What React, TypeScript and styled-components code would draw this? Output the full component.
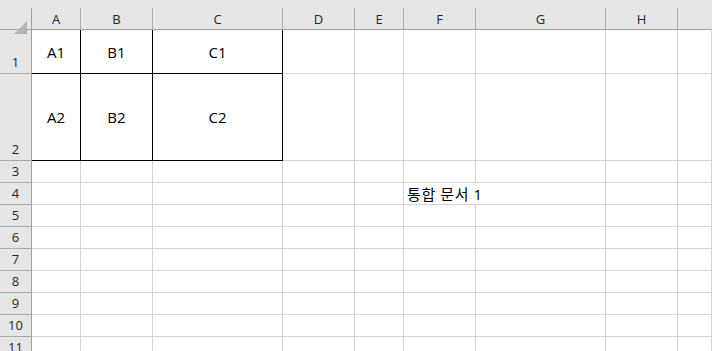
import React from 'react';
import styled, { createGlobalStyle } from 'styled-components';

const GlobalStyle = createGlobalStyle`
  html, body {
    margin: 0;
    padding: 0;
    overflow: hidden;
    background: #ffffff;
  }
  body {
    font-family: "Open Sans", "Noto Sans CJK KR", sans-serif;
  }
`;

// widths include the 1px right grid line
const COLUMNS = [
  { name: 'A', width: 49 },
  { name: 'B', width: 72 },
  { name: 'C', width: 130 },
  { name: 'D', width: 72 },
  { name: 'E', width: 49 },
  { name: 'F', width: 72 },
  { name: 'G', width: 130 },
  { name: 'H', width: 72 },
  { name: '', width: 34 },
];

// heights include the 1px bottom grid line
const ROWS = [44, 87, 22, 22, 22, 22, 22, 22, 22, 22, 22];

const cellData: Record<string, string> = {
  A1: 'A1',
  B1: 'B1',
  C1: 'C1',
  A2: 'A2',
  B2: 'B2',
  C2: 'C2',
  F4: '통합 문서 1',
};

const boxed = new Set(['A1', 'B1', 'C1', 'A2', 'B2', 'C2']);

const Sheet = styled.div`
  display: grid;
  grid-template-columns: 32px ${COLUMNS.map((c) => `${c.width}px`).join(' ')};
  grid-template-rows: 8px 22px ${ROWS.map((h) => `${h}px`).join(' ')};
  width: 712px;
  height: 351px;
  overflow: hidden;
  background: #ffffff;
`;

const TopStrip = styled.div`
  grid-column: 1 / -1;
  background: #e6e6e6;
`;

const Corner = styled.div`
  position: relative;
  background: #e6e6e6;
  border-right: 1px solid #9f9f9f;
  border-bottom: 1px solid #9f9f9f;
  box-sizing: border-box;

  &::after {
    content: '';
    position: absolute;
    left: 14px;
    top: 13px;
    width: 0;
    height: 0;
    border-style: solid;
    border-width: 0 0 13px 13px;
    border-color: transparent transparent #b5b5b5 transparent;
  }
`;

const ColHeader = styled.div<{ $last?: boolean }>`
  display: flex;
  align-items: center;
  justify-content: center;
  background: #e6e6e6;
  border-right: 1px solid ${({ $last }) => ($last ? '#e6e6e6' : '#ababab')};
  border-bottom: 1px solid #9f9f9f;
  box-sizing: border-box;
  font-size: 13px;
  color: #262626;
  padding-top: 1px;
`;

const RowHeader = styled.div`
  display: flex;
  align-items: flex-end;
  justify-content: center;
  background: #e6e6e6;
  border-right: 1px solid #9f9f9f;
  border-bottom: 1px solid #ababab;
  box-sizing: border-box;
  font-size: 13px;
  color: #262626;
  padding-bottom: 1px;
  line-height: 19px;
`;

const Cell = styled.div<{ $boxed?: boolean; $spill?: boolean; $left?: boolean }>`
  display: flex;
  align-items: center;
  justify-content: ${({ $left }) => ($left ? 'flex-start' : 'center')};
  padding-left: ${({ $left }) => ($left ? '3px' : '0')};
  box-sizing: border-box;
  border-right: 1px solid
    ${({ $boxed, $spill }) => ($boxed ? '#000000' : $spill ? '#ffffff' : '#d4d4d4')};
  border-bottom: 1px solid ${({ $boxed }) => ($boxed ? '#000000' : '#d4d4d4')};
  font-size: 15px;
  letter-spacing: ${({ $spill }) => ($spill ? '0.6px' : '0')};
  color: #000000;
  white-space: nowrap;
  overflow: visible;
  position: relative;
  z-index: ${({ $spill }) => ($spill ? 1 : 0)};
`;

const App = () => {
  return (
    <>
      <GlobalStyle />
      <Sheet>
        <TopStrip />
        <Corner />
        {COLUMNS.map((c, i) => (
          <ColHeader key={`h${i}`} $last={i === COLUMNS.length - 1}>
            {c.name}
          </ColHeader>
        ))}
        {ROWS.map((_, r) => {
          const rowNum = r + 1;
          return (
            <React.Fragment key={rowNum}>
              <RowHeader>{rowNum}</RowHeader>
              {COLUMNS.map((c, i) => {
                const ref = `${c.name}${rowNum}`;
                const text = c.name ? cellData[ref] : undefined;
                const isSpill = ref === 'F4';
                return (
                  <Cell
                    key={`${rowNum}-${i}`}
                    $boxed={boxed.has(ref)}
                    $spill={isSpill}
                    $left={isSpill}
                  >
                    {text}
                  </Cell>
                );
              })}
            </React.Fragment>
          );
        })}
      </Sheet>
    </>
  );
};

export default App;
